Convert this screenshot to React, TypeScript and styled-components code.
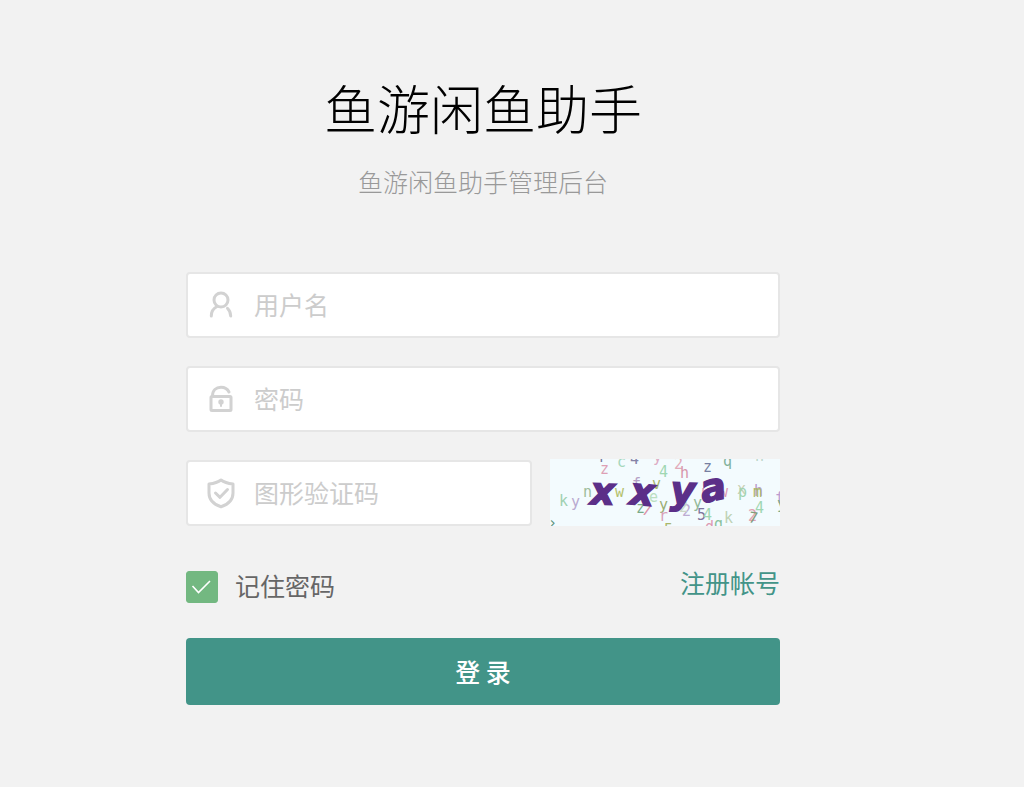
import React from "react";
import styled, { createGlobalStyle } from "styled-components";

const GlobalStyle = createGlobalStyle`
  *, *::before, *::after { box-sizing: border-box; }
  body {
    margin: 0;
    background: #f2f2f2;
    font-family: "Noto Sans CJK SC", "Noto Sans", sans-serif;
    font-size: 25px;
  }
`;

const Page = styled.main`
  display: flex;
  justify-content: center;
  padding: 67px 58px 80px 0;
`;

const Panel = styled.div`
  width: 100%;
  max-width: 594px;
`;

const Header = styled.header`
  text-align: center;
`;

const Title = styled.h1`
  margin: 0;
  font-size: 53px;
  font-weight: 300;
  line-height: 80px;
  color: #000;
`;

const Subtitle = styled.p`
  margin: 16px 0 0;
  font-weight: 300;
  line-height: 36px;
  color: #999;
`;

const Form = styled.form`
  display: flex;
  flex-direction: column;
  gap: 28px;
  margin-top: 73px;
`;

const Field = styled.label`
  display: flex;
  flex: 1;
  align-items: center;
  min-width: 0;
  height: 66px;
  border: 2px solid #e6e6e6;
  border-radius: 4px;
  background: #fff;
`;

const FieldIcon = styled.svg`
  flex: none;
  width: 66px;
  height: 32px;
  fill: none;
  stroke: #d2d2d2;
  stroke-width: 3;
  stroke-linecap: round;
  stroke-linejoin: round;
`;

const Input = styled.input`
  flex: 1;
  min-width: 0;
  height: 100%;
  padding: 0 0 3px;
  border: 0;
  outline: 0;
  background: transparent;
  font: inherit;
  color: #333;

  &::placeholder {
    color: #ccc;
    opacity: 1;
  }
`;

const Row = styled.div`
  display: flex;
`;

const CodeRow = styled(Row)`
  gap: 18px;
`;

const CaptchaButton = styled.button`
  flex: none;
  width: 230px;
  height: 67px;
  margin: -1px 0 0;
  padding: 0;
  border: 0;
  background: #f3fbfe;
  cursor: pointer;
`;

const CaptchaImage = styled.svg`
  display: block;
  width: 100%;
  height: 100%;
  font-family: "DejaVu Sans Mono", monospace;
  font-size: 15px;
`;

const OptionsRow = styled(Row)`
  align-items: flex-start;
  justify-content: space-between;
  margin-top: 10px;
  line-height: 36px;
`;

const Remember = styled.label`
  display: flex;
  align-items: center;
  gap: 17px;
  padding-top: 3px;
  color: #666;
`;

const CheckWrap = styled.span`
  display: grid;
  margin-top: 3px;

  & > * {
    grid-area: 1 / 1;
  }

  & > svg {
    width: 32px;
    height: 32px;
    fill: none;
    stroke: #fff;
    stroke-width: 1.6;
    pointer-events: none;
  }

  & > input:checked {
    border-color: #73b881;
    background: #73b881;
  }
`;

const Checkbox = styled.input`
  appearance: none;
  width: 32px;
  height: 32px;
  margin: 0;
  border: 1px solid #d2d2d2;
  border-radius: 3px;
  background: #fff;
`;

const Register = styled.a`
  color: #429488;
  text-decoration: none;
`;

const Submit = styled.button`
  height: 67px;
  margin-top: 7px;
  padding: 0 0 2px;
  border: 0;
  border-radius: 4px;
  background: #429488;
  color: #fff;
  font: inherit;
  font-weight: 500;
  cursor: pointer;
`;

type Glyph = [char: string, x: number, y: number, color: string, angle?: number];

const noise: Glyph[] = [
  ["r", 48, 3, "#777798"],
  ["z", 50, 15, "#dda0b5"],
  ["c", 67, 8, "#a5d7bb"],
  ["4", 80, 5, "#8583a7"],
  ["y", 103, 3, "#ddabc4"],
  ["2", 124, 10, "#e2abba"],
  ["4", 109, 18, "#9fd7b2"],
  ["h", 130, 19, "#d897ac"],
  ["z", 153, 13, "#777fa1"],
  ["q", 173, 7, "#82b29b"],
  ["n", 205, 2, "#bcd5c9"],
  ["k", 9, 47, "#9fd0b0"],
  ["y", 21, 48, "#b9a9d0"],
  ["n", 33, 38, "#9fbd9d"],
  ["w", 65, 38, "#b4c16c"],
  ["f", 82, 30, "#b5a1c5"],
  ["v", 102, 30, "#a9b66b"],
  ["e", 99, 43, "#bbdfc2"],
  ["z", 86, 54, "#79aa89"],
  ["7", 91, 55, "#dc91a6", 15],
  ["y", 109, 51, "#9aad72"],
  ["r", 109, 62, "#d9a1b8"],
  ["2", 132, 57, "#bdacd2"],
  ["2", 129, 53, "#cbd7c4"],
  ["y", 143, 49, "#91b899"],
  ["5", 147, 61, "#7e779e"],
  ["4", 153, 61, "#9fd7b2"],
  ["k", 174, 64, "#bed2b4"],
  ["u", 151, 38, "#dd9ab3"],
  ["w", 169, 38, "#dd9ab3"],
  ["x", 187, 35, "#c7cfb5"],
  ["p", 188, 38, "#a1d4af"],
  ["h", 204, 37, "#b99dca"],
  ["m", 203, 38, "#a9b66b"],
  ["4", 205, 54, "#9fd7b2"],
  ["2", 198, 62, "#e0a2b3"],
  ["7", 198, 63, "#829d7c", 10],
  ["d", 155, 73, "#dd9ab3"],
  ["g", 164, 70, "#8ac19c"],
  ["5", 114, 76, "#a9b66b"],
  ["›", -2, 69, "#59927a"],
  ["f", 225, 44, "#bc9cd1"],
  ["y", 227, 50, "#79aa89"],
];

const code: Glyph[] = [
  ["x", 40, 45, "#5b2f88", 2],
  ["x", 79, 45, "#5b2f88", 5],
  ["y", 120, 44, "#5b2f88", 2],
  ["a", 153, 44, "#5b2f88", -12],
];

function Letter({ glyph }: { glyph: Glyph }) {
  const [char, x, y, color, angle = 0] = glyph;
  return (
    <text x={x} y={y} fill={color} transform={`rotate(${angle} ${x} ${y})`}>
      {char}
    </text>
  );
}

function Captcha() {
  return (
    <CaptchaButton type="button" aria-label="刷新验证码">
      <CaptchaImage viewBox="0 0 230 67" aria-hidden="true">
        {noise.map((g, i) => (
          <Letter key={i} glyph={g} />
        ))}
        <g
          fontFamily="DejaVu Sans, sans-serif"
          fontSize="38"
          fontWeight="700"
          fontStyle="italic"
          stroke="#5b2f88"
          strokeWidth="1.5"
        >
          {code.map((g, i) => (
            <Letter key={i} glyph={g} />
          ))}
        </g>
      </CaptchaImage>
    </CaptchaButton>
  );
}

export default function App() {
  return (
    <>
      <GlobalStyle />
      <Page>
        <Panel>
          <Header>
            <Title>鱼游闲鱼助手</Title>
            <Subtitle>鱼游闲鱼助手管理后台</Subtitle>
          </Header>
          <Form onSubmit={(e) => e.preventDefault()}>
            <Row>
              <Field>
                <FieldIcon viewBox="0 0 66 32">
                  <circle cx="33" cy="11" r="7" />
                  <path d="M29 17.5C25 19.5 23.3 23 23.3 27M39.5 19.3C41.5 21 42.5 23.5 42.7 27" />
                </FieldIcon>
                <Input type="text" placeholder="用户名" aria-label="用户名" />
              </Field>
            </Row>
            <Row>
              <Field>
                <FieldIcon viewBox="0 0 66 32">
                  <rect x="23" y="13.5" width="20" height="14" rx="1" />
                  <path d="M24.5 13C24.5 7.500 28 4.300 33 4.300C36.500 4.300 39.500 6 41 9" />
                  <circle cx="33" cy="19" r="1.200" />
                  <path d="M33 19V23" strokeWidth="2" />
                </FieldIcon>
                <Input type="password" placeholder="密码" aria-label="密码" />
              </Field>
            </Row>
            <CodeRow>
              <Field>
                <FieldIcon viewBox="0 0 66 32">
                  <path d="M33 3C29.500 5.700 25.500 6.500 21 7V16C21 23 26 27.500 33 29.800C40 27.500 45 23 45 16V7C40.500 6.500 36.500 5.700 33 3Z" />
                  <path d="M27.500 16L32 20.300L39.500 12.500" />
                </FieldIcon>
                <Input type="text" placeholder="图形验证码" aria-label="图形验证码" />
              </Field>
              <Captcha />
            </CodeRow>
            <OptionsRow>
              <Remember>
                <CheckWrap>
                  <Checkbox type="checkbox" defaultChecked />
                  <svg viewBox="0 0 32 32">
                    <path d="M6.500 15L12.500 21.500L24 10" />
                  </svg>
                </CheckWrap>
                记住密码
              </Remember>
              <Register href="#register">注册帐号</Register>
            </OptionsRow>
            <Submit type="submit">登 录</Submit>
          </Form>
        </Panel>
      </Page>
    </>
  );
}
